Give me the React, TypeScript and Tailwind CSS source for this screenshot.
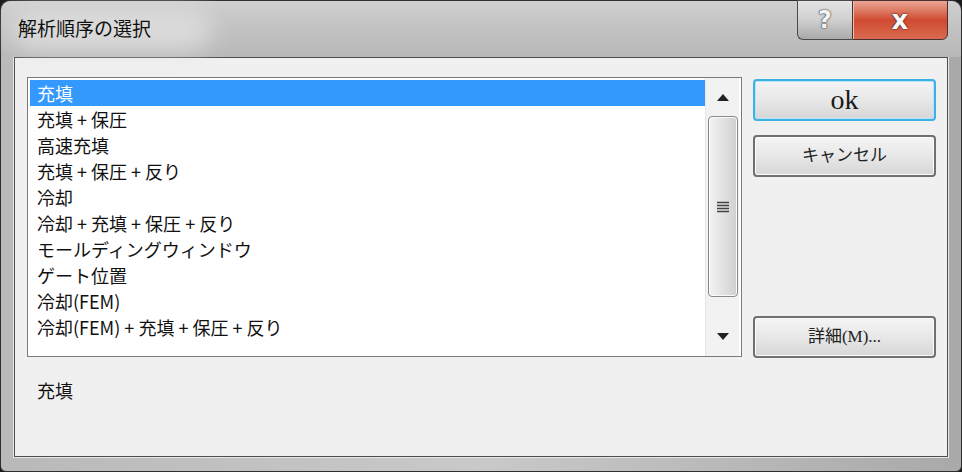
import React from 'react';

const items = [
  '充填',
  '充填 + 保圧',
  '高速充填',
  '充填 + 保圧 + 反り',
  '冷却',
  '冷却 + 充填 + 保圧 + 反り',
  'モールディングウィンドウ',
  'ゲート位置',
  '冷却(FEM)',
  '冷却(FEM) + 充填 + 保圧 + 反り',
];

const jp = { fontFamily: '"Noto Sans CJK JP", "Liberation Sans", sans-serif' };
const serif = { fontFamily: '"Liberation Serif", "Noto Sans CJK JP", serif' };

function Button({ label, focused, big }: { label: string; focused?: boolean; big?: boolean }) {
  return (
    <button
      type="button"
      className={`w-[183px] h-[42px] rounded-[4px] border-2 flex items-center justify-center bg-gradient-to-b from-[#f4f4f4] via-[#e8e8e8] to-[#d6d6d6] ${
        focused ? 'border-[#3db1e6] shadow-[inset_0_0_0_1px_#b8e4f7]' : 'border-[#707070] shadow-[inset_0_0_0_1px_#fbfbfb]'
      } ${big ? 'text-[28px] text-[#1a1a1a]' : 'text-[17px] text-[#222]'}`}
      style={serif}
    >
      {label}
    </button>
  );
}

export default function App() {
  return (
    <div className="w-[962px] h-[472px] bg-[#1a1a1a] overflow-hidden">
      <div className="h-full flex flex-col rounded-t-[10px] rounded-b-[6px] border border-[#2e2e2e] bg-gradient-to-r from-[#b9b9b9] via-[#c9c9c9] to-[#a9a9a9]">
        {/* title bar */}
        <div className="h-[56px] flex items-start relative bg-gradient-to-b from-[#cfcfcf] via-[#c2c2c2] to-[#b8b8b8] rounded-t-[10px]">
          <div className="absolute left-[10px] top-[8px] w-[200px] h-[42px] rounded-full bg-[#e2e2e2] blur-md opacity-80" />
          <span className="relative ml-[17px] mt-[14px] text-[19px] leading-[26px] text-[#111]" style={jp}>
            解析順序の選択
          </span>
          <div className="ml-auto mr-[13px] flex h-[40px] -mt-px">
            <div className="w-[55px] h-full flex items-center justify-center border border-[#4a4a4a] border-r-0 rounded-bl-[6px] bg-gradient-to-b from-[#e4e4e4] via-[#cfcfcf] to-[#a9a9a9]">
              <span className="text-[24px] font-bold text-[#f4f4f4] leading-none [text-shadow:0_0_2px_#333,0_0_1px_#222]" style={{ fontFamily: '"DejaVu Sans", sans-serif' }}>?</span>
            </div>
            <div className="w-[96px] h-full flex items-center justify-center border border-[#4a3030] rounded-br-[6px] bg-gradient-to-b from-[#e9a593] via-[#cf4a30] to-[#d86a4f] shadow-[inset_1px_0_0_#f0c0b0]">
              <span className="text-[26px] font-bold text-[#f8f8f8] leading-none [text-shadow:0_0_2px_#3a1a10,0_0_1px_#3a1a10]" style={{ fontFamily: '"DejaVu Sans", sans-serif' }}>x</span>
            </div>
          </div>
        </div>

        {/* client area */}
        <div className="flex-1 mx-[13px] mb-[14px] border border-[#4d4d4d] shadow-[0_0_0_1px_#e6e6e6] bg-[#f0f0f0] flex flex-col">
          <div className="flex pl-[12px] pr-[11px] pt-[19px]">
            {/* list box */}
            <div className="w-[715px] h-[280px] border border-[#7a7a7a] bg-white flex">
              <ul className="flex-1 pt-[2px] pl-[2px]" style={jp}>
                {items.map((it, i) => (
                  <li
                    key={it}
                    className={`h-[26px] flex items-center pl-[7px] text-[18px] leading-none ${
                      i === 0 ? 'bg-[#3399ff] text-white' : 'text-[#111]'
                    }`}
                  >
                    {it}
                  </li>
                ))}
              </ul>
              {/* scrollbar */}
              <div className="w-[34px] h-full bg-[#f2f2f2] border-l border-[#e6e6e6] flex flex-col items-center mr-[2px]">
                <div className="h-[38px] w-full flex items-center justify-center">
                  <svg width="12" height="7" viewBox="0 0 12 7"><path d="M6 0 L12 7 L0 7 Z" fill="#222" /></svg>
                </div>
                <div className="w-[30px] h-[181px] rounded-[4px] border border-[#8a8a8a] bg-gradient-to-r from-[#f3f3f3] via-[#e2e2e2] to-[#cfcfcf] flex items-center justify-center shadow-[inset_0_0_0_1px_#fafafa]">
                  <svg width="14" height="12" viewBox="0 0 14 12">
                    <path d="M1 1.5 H13 M1 4.5 H13 M1 7.5 H13 M1 10.5 H13" stroke="#444" strokeWidth="1.4" />
                  </svg>
                </div>
                <div className="flex-1 w-full flex items-end justify-center pb-[16px]">
                  <svg width="12" height="7" viewBox="0 0 12 7"><path d="M0 0 L12 0 L6 7 Z" fill="#222" /></svg>
                </div>
              </div>
            </div>

            {/* buttons */}
            <div className="ml-[11px] flex flex-col h-[281px] pt-[2px]">
              <Button label="ok" focused big />
              <div className="mt-[14px]">
                <Button label="キャンセル" />
              </div>
              <div className="mt-auto">
                <Button label="詳細(M)..." />
              </div>
            </div>
          </div>
          <div className="pl-[22px] pt-[19px] text-[18px] text-[#111]" style={jp}>
            充填
          </div>
        </div>
      </div>
    </div>
  );
}
